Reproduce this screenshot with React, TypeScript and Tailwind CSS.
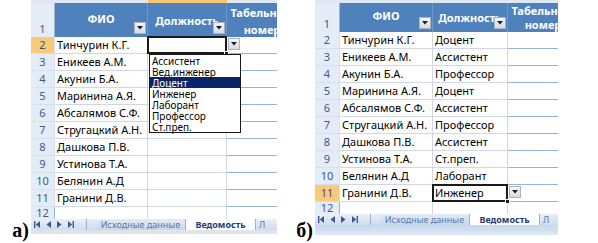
import React from "react";

type PanelProps = {
  wNum: number;
  wDol: number;
  headerH: number;
  values: string[];
  selRow: number;
  variant: "a" | "b";
};

const names = [
  "Тинчурин К.Г.",
  "Еникеев А.М.",
  "Акунин Б.А.",
  "Маринина А.Я.",
  "Абсалямов С.Ф.",
  "Стругацкий А.Н.",
  "Дашкова П.В.",
  "Устинова Т.А.",
  "Белянин А.Д",
  "Гранини Д.В.",
];

const rightVals = [
  "Доцент",
  "Ассистент",
  "Профессор",
  "Доцент",
  "Ассистент",
  "Профессор",
  "Ассистент",
  "Ст.преп.",
  "Лаборант",
  "Инженер",
];

function DropBtn({ className = "" }: { className?: string }) {
  return (
    <div
      className={
        "flex items-center justify-center w-[12px] h-[12px] border border-[#a9b3c2] bg-gradient-to-b from-[#f4f6f9] to-[#d6dce5] " +
        className
      }
    >
      <svg width="6" height="4" viewBox="0 0 6 4">
        <path d="M0 0 L6 0 L3 3.5 Z" fill="#1e1e1e" />
      </svg>
    </div>
  );
}

function Arrows() {
  return (
    <div className="flex items-center gap-[6px] pl-[3px] w-[55px] shrink-0 h-full">
      <svg width="6" height="7" viewBox="0 0 6 7">
        <rect x="0" y="0" width="1.4" height="7" fill="#3a5a8f" />
        <path d="M6 0 L1.8 3.5 L6 7 Z" fill="#3a5a8f" />
      </svg>
      <svg width="5" height="7" viewBox="0 0 5 7">
        <path d="M5 0 L0.5 3.5 L5 7 Z" fill="#3a5a8f" />
      </svg>
      <svg width="5" height="7" viewBox="0 0 5 7">
        <path d="M0 0 L4.5 3.5 L0 7 Z" fill="#3a5a8f" />
      </svg>
      <svg width="6" height="7" viewBox="0 0 6 7">
        <path d="M0 0 L4.2 3.5 L0 7 Z" fill="#3a5a8f" />
        <rect x="4.6" y="0" width="1.4" height="7" fill="#3a5a8f" />
      </svg>
    </div>
  );
}

function TabBar() {
  return (
    <div className="flex items-stretch h-[11px] bg-gradient-to-b from-[#e9eff8] to-[#cfdcee] text-[9px] leading-[11px] overflow-hidden whitespace-nowrap">
      <Arrows />
      <div className="w-[1px] shrink-0 bg-[#9db1cf]" />
      <div className="w-[9px] shrink-0" />
      <div className="flex shrink-0 items-center justify-center w-[90px] text-[#5b78a8] bg-gradient-to-b from-[#e4ebf5] to-[#c9d7eb] border-r border-[#9db1cf]">
        Исходные данные
      </div>
      <div className="flex shrink-0 items-center justify-center w-[70px] bg-white font-bold text-[#1f3d73] border-r border-[#9db1cf]">
        Ведомость
      </div>
      <div className="flex items-center pl-[3px] text-[#5b78a8]">Л</div>
    </div>
  );
}

function Panel({ wNum, wDol, headerH, values, selRow, variant }: PanelProps) {
  const rows = [2, 3, 4, 5, 6, 7, 8, 9, 10, 11];
  return (
    <div
      className="relative flex flex-col overflow-hidden"
      style={{ width: wNum + 93 + wDol + 50 }}
    >
      {/* top strip */}
      <div className="flex h-[3px]">
        <div className="shrink-0 bg-[#dfe7f3]" style={{ width: wNum }} />
        <div className="shrink-0 w-[93px] bg-[#dfe7f3]" />
        <div
          className={"shrink-0 " + (variant === "a" ? "bg-[#f7c56f]" : "bg-[#dfe7f3]")}
          style={{ width: wDol }}
        />
        <div className="flex-1 bg-[#dfe7f3]" />
      </div>
      {/* header */}
      <div className="flex" style={{ height: headerH }}>
        <div
          className="shrink-0 flex items-end justify-center bg-[#e4ecf7] border-r border-[#9eb6ce] text-[#3f5a86] text-[11px] leading-[16px]"
          style={{ width: wNum }}
        >
          1
        </div>
        <div className="shrink-0 relative w-[93px] flex items-center justify-center bg-[#4f81bd] text-white font-bold text-[11px] border-r border-[#6f97c8]">
          <span className="-mt-[2px]">ФИО</span>
          <DropBtn className="absolute right-[1px] bottom-[3px]" />
        </div>
        <div
          className="shrink-0 relative flex items-center justify-center bg-[#4f81bd] text-white font-bold text-[11px] border-r border-[#6f97c8] whitespace-nowrap"
          style={{ width: wDol }}
        >
          <span className="mt-[2px]">Должность</span>
          <DropBtn className="absolute right-[1px] bottom-[3px]" />
        </div>
        <div
          className={
            "w-[70px] shrink-0 bg-[#4f81bd] text-white font-bold text-[11px] text-center " +
            (variant === "a" ? "leading-[17px] pt-[1px]" : "leading-[14px] pt-[1px]")
          }
        >
          Табельный номер
        </div>
      </div>
      {/* rows */}
      {rows.map((r, i) => {
        const sel = r === selRow;
        return (
          <div key={r} className="flex h-[17px] text-[11px] leading-[16px]">
            <div
              className={
                "shrink-0 flex items-center justify-center border-r border-[#9eb6ce] border-b border-[#d6e0ee] " +
                (sel
                  ? "bg-[#f9c97c] text-[#3f4f6a]"
                  : "bg-[#e4ecf7] text-[#3f5a86]")
              }
              style={{ width: wNum }}
            >
              {r}
            </div>
            <div className="shrink-0 w-[93px] flex items-center pl-[2px] border-r border-[#d0d7e5] border-b border-[#95b3d7] text-black whitespace-nowrap overflow-hidden">
              {names[i]}
            </div>
            <div
              className="shrink-0 relative flex items-center pl-[2px] border-r border-[#d0d7e5] border-b border-[#95b3d7] text-black whitespace-nowrap"
              style={{ width: wDol }}
            >
              {values[i]}
              {sel && (
                <>
                  <div className="absolute left-[-1px] top-[-1px] right-[-1px] bottom-[-1px] border-2 border-[#1a1a1a]" />
                  <div className="absolute right-[-3px] bottom-[-3px] w-[5px] h-[5px] bg-[#1a1a1a] border border-white" />
                  <DropBtn className="absolute right-[-14px] top-[1px]" />
                </>
              )}
            </div>
            <div className="flex-1 border-b border-[#95b3d7]" />
          </div>
        );
      })}
      {/* row 12 */}
      <div className="flex h-[12px] text-[11px] leading-[12px]">
        <div
          className="shrink-0 flex items-center justify-center bg-[#e4ecf7] text-[#3f5a86] border-r border-[#9eb6ce]"
          style={{ width: wNum }}
        >
          12
        </div>
        <div className="shrink-0 w-[93px] border-r border-[#d0d7e5]" />
        <div className="shrink-0 border-r border-[#d0d7e5]" style={{ width: wDol }} />
        <div className="flex-1" />
      </div>
      <TabBar />
      {variant === "a" ? (
        <div className="h-[4px] bg-[#dfe4ea]" />
      ) : (
        <div className="h-[10px] bg-gradient-to-b from-[#c5d6ee] to-[#dfe8f5]" />
      )}
      {/* dropdown list */}
      {variant === "a" && (
        <div className="absolute left-[118px] top-[54px] w-[92px] bg-white border border-[#1a1a1a] text-[10px] leading-[10px] text-black">
          {[
            "Ассистент",
            "Вед.инженер",
            "Доцент",
            "Инженер",
            "Лаборант",
            "Профессор",
            "Ст.преп.",
          ].map((t) => (
            <div
              key={t}
              className={
                "h-[11px] pl-[2px] flex items-center " +
                (t === "Доцент" ? "bg-[#0a246a] text-white" : "")
              }
            >
              {t}
            </div>
          ))}
        </div>
      )}
    </div>
  );
}

export default function App() {
  return (
    <div
      className="w-[598px] h-[243px] bg-white flex overflow-hidden"
      style={{ fontFamily: '"Noto Sans", "Open Sans", sans-serif' }}
    >
      <div className="flex w-[288px] shrink-0">
        <div className="w-[31px] shrink-0 flex flex-col justify-end items-end pb-[3px] pr-[2px]">
          <span
            className="font-bold text-[20px] leading-[20px] text-black"
            style={{ fontFamily: '"Liberation Serif", serif' }}
          >
            а)
          </span>
        </div>
        <div className="self-start">
          <Panel
            wNum={24}
            wDol={79}
            headerH={34}
            values={["", "", "", "", "", "", "", "", "", ""]}
            selRow={2}
            variant="a"
          />
        </div>
      </div>
      <div className="flex">
        <div className="w-[27px] shrink-0 flex flex-col justify-end items-end pb-[3px] pr-[2px]">
          <span
            className="font-bold text-[20px] leading-[20px] text-black"
            style={{ fontFamily: '"Liberation Serif", serif' }}
          >
            б)
          </span>
        </div>
        <div className="self-start">
          <Panel
            wNum={25}
            wDol={75}
            headerH={29}
            values={rightVals}
            selRow={11}
            variant="b"
          />
        </div>
      </div>
    </div>
  );
}
